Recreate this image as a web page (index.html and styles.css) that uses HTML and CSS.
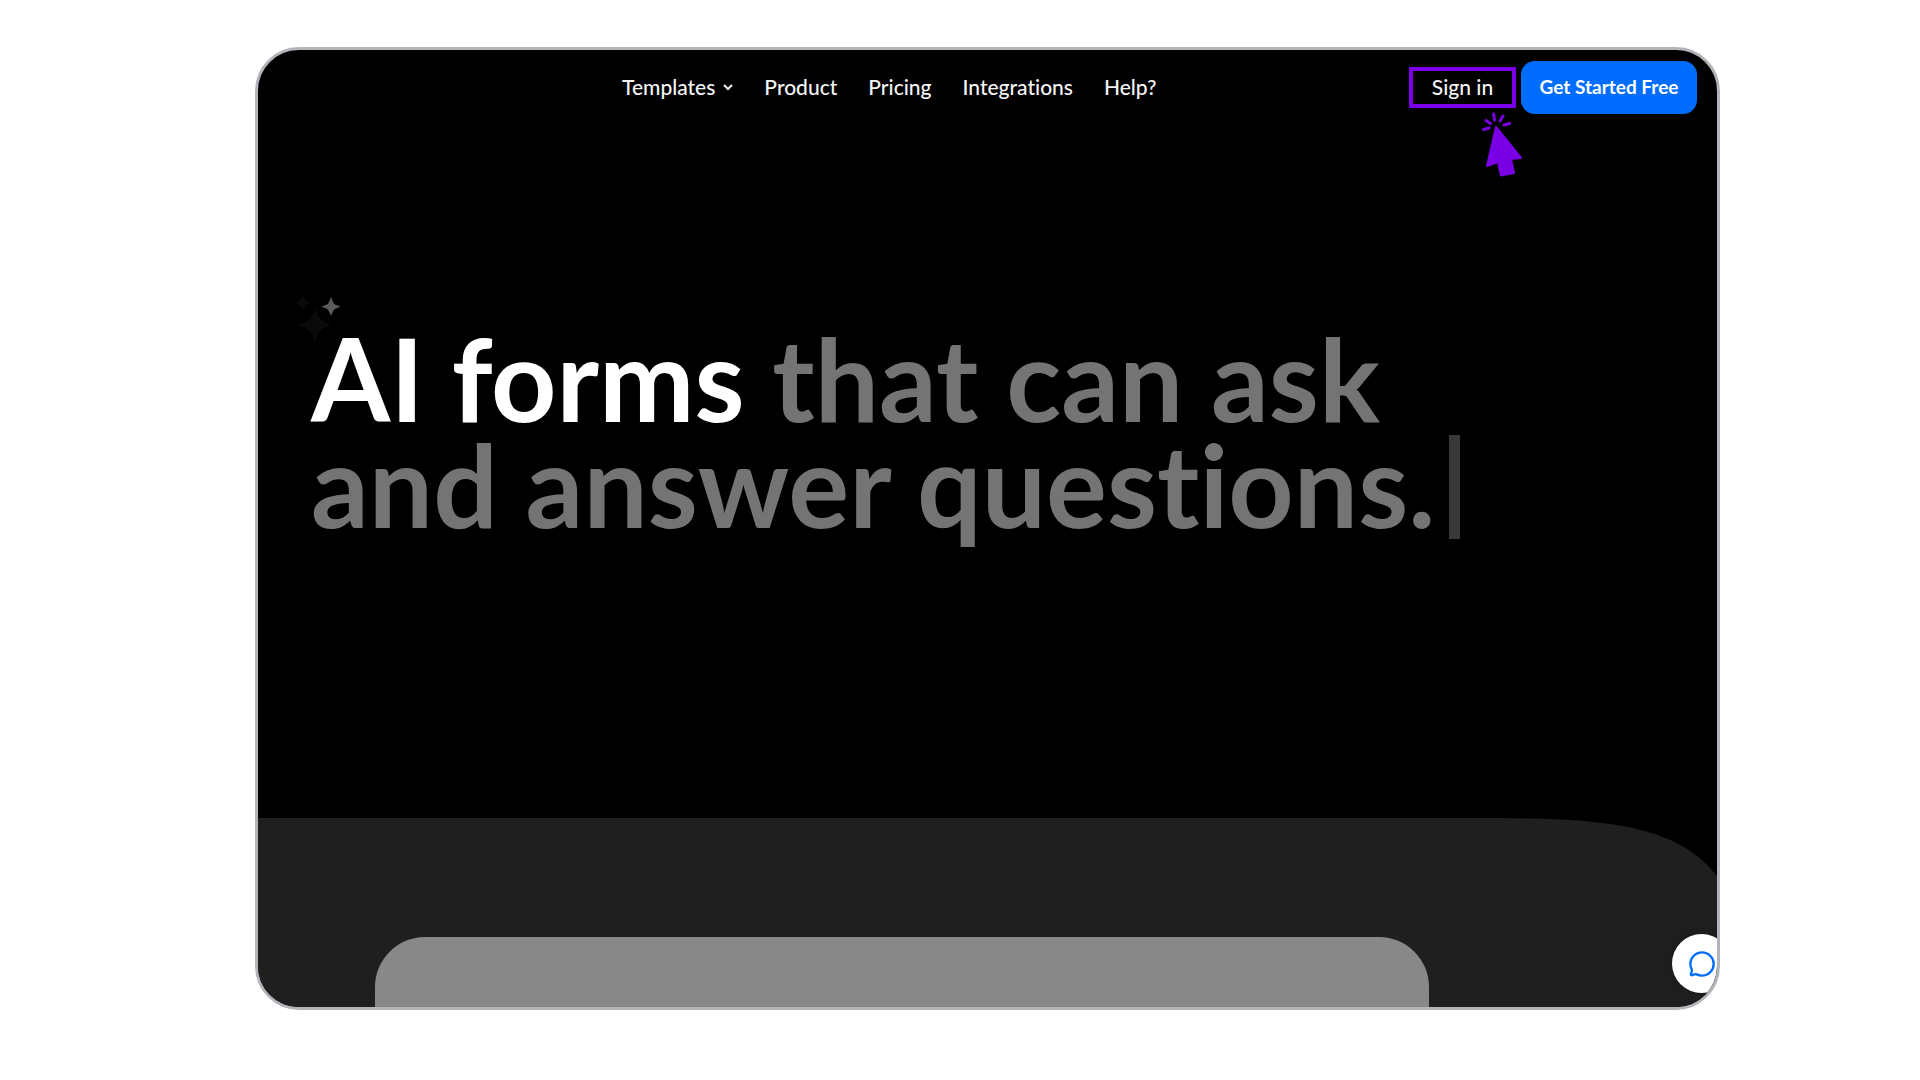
FILE: index.html
```
<!DOCTYPE html>
<html lang="en">
<head>
    <meta charset="utf-8">
    <title>AI forms</title>
    <link rel="stylesheet" href="styles.css">
</head>
<body>
    <div class="window">
        <header class="header">
            <nav class="nav">
                <button class="nav-link" type="button">Templates
                    <svg class="chevron" viewBox="0 0 10 10"><path d="M1 3L5 7L9 3"/></svg>
                </button>
                <a class="nav-link" href="#">Product</a>
                <a class="nav-link" href="#">Pricing</a>
                <a class="nav-link" href="#">Integrations</a>
                <a class="nav-link" href="#">Help?</a>
            </nav>
            <div class="actions">
                <a class="sign-in" href="#">Sign in
                    <svg class="pointer" viewBox="0 0 45 66">
                        <path class="rays" d="M3.5 17.5L9 16M6 8.500L10.500 11.500M13.500 2L14.500 8M23 4L20 9M29.500 11.500L24 13"/>
                        <path class="arrow" d="M16 15L41 46L31 47L34 61L21 63.500L18 50L7 54Z"/>
                    </svg>
                </a>
                <button class="get-started" type="button">Get Started Free</button>
            </div>
        </header>
        <main>
            <section class="hero">
                <svg class="sparkles" viewBox="0 0 48 50">
                    <path class="dim" d="M9 1Q10.500 7.500 18 9Q10.500 10.500 9 17Q7.500 10.500 0 9Q7.500 7.500 9 1Z"/>
                    <path class="dim" d="M21 14Q24 28 38 31Q24 34 21 48Q18 34 4 31Q18 28 21 14Z"/>
                    <path class="lit" d="M37 3L39.500 9Q40 10 41 10.500L46.500 12.500L41 15Q40 15.500 39.500 16.500L37 22L34.500 16.500Q34 15.500 33 15L27.500 12.500L33 10.500Q34 10 34.500 9Z"/>
                </svg>
                <h1 class="title"><span class="typed">AI forms</span> that can ask<br>and answer questions.<span class="caret"></span></h1>
            </section>
            <section class="preview">
                <svg class="curve" viewBox="0 0 240 58"><path d="M0 0C120 0 198 4 240 58V0Z"/></svg>
                <div class="card"></div>
            </section>
        </main>
        <button class="chat" type="button" aria-label="Chat">
            <svg class="chat-icon" viewBox="0 0 24 24"><path d="M12 22C17.500 22 22 17.500 22 12S17.500 2 12 2S2 6.500 2 12C2 13.800 2.500 15.500 3.300 17Q3.600 18 3 19L2.400 20.700Q2.300 21.800 3.500 21.600L5.500 20.900Q6.500 20.500 7.300 20.900C8.700 21.600 10.300 22 12 22Z"/></svg>
        </button>
    </div>
</body>
</html>
```
FILE: styles.css
```
* {
    box-sizing: border-box;
}
body {
    margin: 0;
    padding: 47px 200px 70px 255px;
    background-color: #ffffff;
    font-family: Lato, "Liberation Sans", sans-serif;
    font-variant-ligatures: none;
}
.window {
    position: relative;
    overflow: hidden;
    background-color: #000000;
    border: 3px solid #b5b3ba;
    border-radius: 44px;
}
.header {
    display: flex;
    align-items: center;
    justify-content: space-between;
    height: 75px;
    padding: 0 20px 0 364px;
}
.nav {
    display: flex;
    gap: 31px;
}
.nav-link, .sign-in {
    color: #f4f4f4;
    font-size: 21px;
    font-weight: 500;
    line-height: 24px;
    text-decoration: none;
}
.nav-link {
    display: flex;
    align-items: center;
    gap: 8px;
    padding: 0 0 2px;
    border: 0;
    background: none;
    font-family: inherit;
}
.chevron {
    width: 10px;
    height: 10px;
    fill: none;
    stroke: #f4f4f4;
    stroke-width: 2;
}
.actions {
    display: flex;
    align-items: center;
    gap: 5px;
}
.sign-in {
    position: relative;
    width: 107px;
    padding: 4px 0 5px;
    border: 4px solid #7a00e6;
    text-align: center;
}
.pointer {
    position: absolute;
    top: 41px;
    left: 67px;
    width: 45px;
    height: 66px;
}
.rays {
    fill: none;
    stroke: #7a00e6;
    stroke-width: 3;
    stroke-linecap: round;
}
.arrow {
    fill: #7a00e6;
    stroke: #7a00e6;
    stroke-width: 2;
    stroke-linejoin: round;
}
.get-started {
    width: 176px;
    height: 53px;
    padding: 0 0 2px;
    border: 0;
    border-radius: 14px;
    background-color: #006dff;
    color: #ffffff;
    font-family: inherit;
    font-size: 19px;
    font-weight: 700;
}
.hero {
    position: relative;
    padding: 200px 53px 279px;
}
.sparkles {
    position: absolute;
    top: 169px;
    left: 36px;
    width: 48px;
    height: 50px;
}
.dim {
    fill: #0a0a0a;
}
.lit {
    fill: #5a5a5a;
}
.title {
    position: relative;
    margin: 0;
    color: #747474;
    font-size: 114px;
    font-weight: 700;
    line-height: 106px;
    white-space: nowrap;
}
.typed {
    color: #ffffff;
}
.caret {
    display: inline-block;
    width: 11px;
    height: 104px;
    margin-left: 14px;
    background-color: #383838;
    vertical-align: -11px;
}
.preview {
    position: relative;
    padding: 119px 288px 0 117px;
    background-color: #1f1f1f;
}
.curve {
    position: absolute;
    top: 0;
    right: 0;
    width: 240px;
    height: 58px;
}
.card {
    height: 70px;
    border-radius: 50px 50px 0 0;
    background-color: #888888;
}
.chat {
    position: absolute;
    right: -14px;
    bottom: 14px;
    display: flex;
    align-items: center;
    justify-content: center;
    width: 59px;
    height: 59px;
    padding: 0;
    border: 0;
    border-radius: 50%;
    background-color: #ffffff;
    box-shadow: 0 0 16px rgba(0, 0, 0, 0.2);
}
.chat-icon {
    width: 28px;
    height: 28px;
    fill: none;
    stroke: #006dff;
    stroke-width: 2;
}
```
